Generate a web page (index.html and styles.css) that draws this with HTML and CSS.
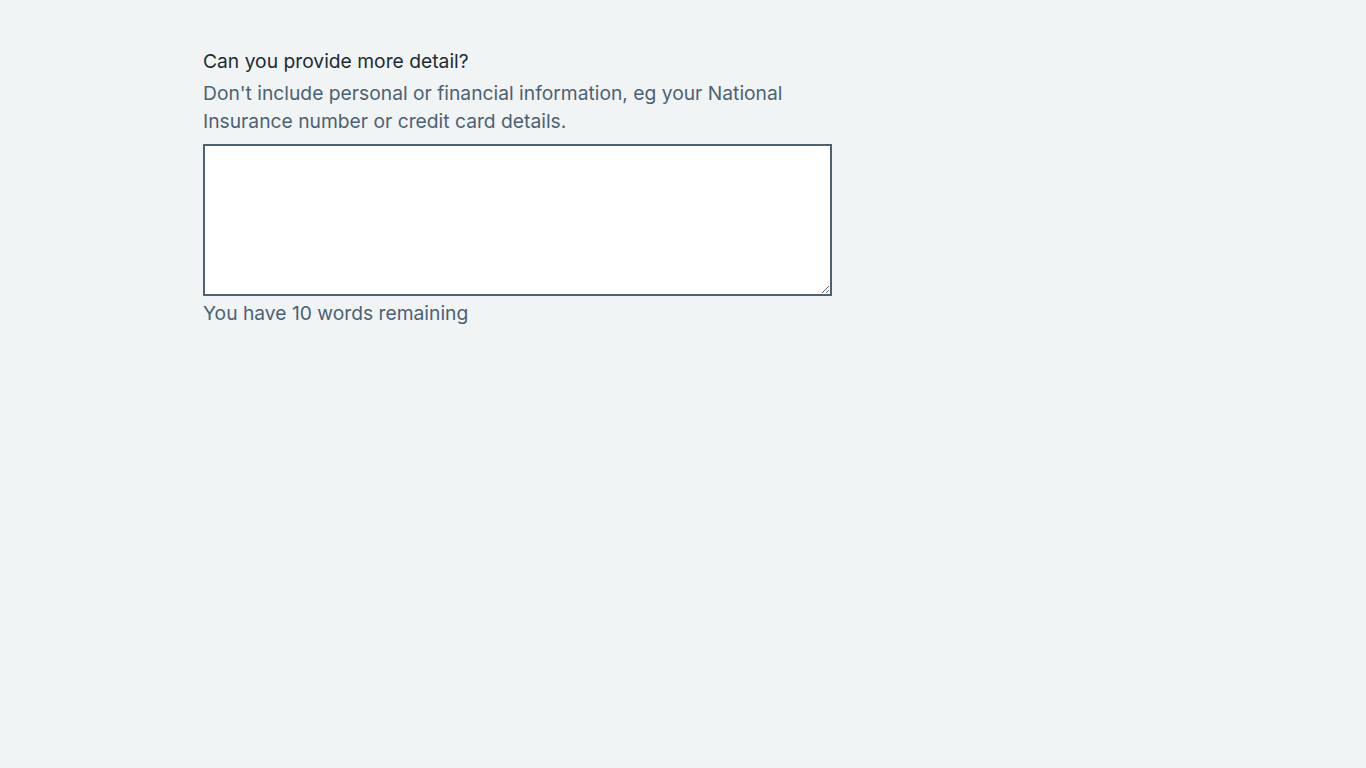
FILE: index.html
```html
<!DOCTYPE html>
<html lang="en">
<head>
<meta charset="utf-8">
<title>Can you provide more detail?</title>
<link rel="stylesheet" href="styles.css">
</head>
<body>
<div class="width-container">
  <main class="main-wrapper">
    <div class="grid-row">
      <div class="column-two-thirds">
        <div class="form-group">
          <label class="label" for="more-detail">Can you provide more detail?</label>
          <div class="hint" id="more-detail-hint">Don't include personal or financial information, eg your National Insurance number or credit card details.</div>
          <textarea class="textarea" id="more-detail" name="more-detail" rows="5" aria-describedby="more-detail-hint"></textarea>
          <div class="count-message">You have 10 words remaining</div>
        </div>
      </div>
    </div>
  </main>
</div>
</body>
</html>
```
FILE: styles.css
```css
html {
  background: #f0f4f5;
}
body {
  margin: 0;
  background: #f0f4f5;
  color: #212b32;
  font-family: "Inter", "Liberation Sans", sans-serif;
  font-size: 19.25px;
  line-height: 28px;
}
.width-container {
  max-width: 960px;
  margin: 0 auto;
}
.main-wrapper {
  display: block;
  padding-top: 47px;
  padding-bottom: 48px;
}
.grid-row {
  display: flex;
  margin: 0 -16px;
}
.column-two-thirds {
  box-sizing: border-box;
  width: 66.6667%;
  padding: 0 16px;
}
.form-group {
  display: flex;
  flex-direction: column;
}
.label {
  display: block;
  margin-bottom: 4px;
  color: #212b32;
}
.hint {
  color: #4c6272;
  margin-bottom: 9px;
}
.textarea {
  display: block;
  box-sizing: border-box;
  width: 100%;
  height: 152px;
  margin: 0 0 3px;
  padding: 4px;
  border: 2px solid #4c6272;
  border-radius: 0;
  background: #ffffff;
  font: inherit;
  color: #212b32;
  resize: vertical;
}
.count-message {
  color: #4c6272;
}
```
